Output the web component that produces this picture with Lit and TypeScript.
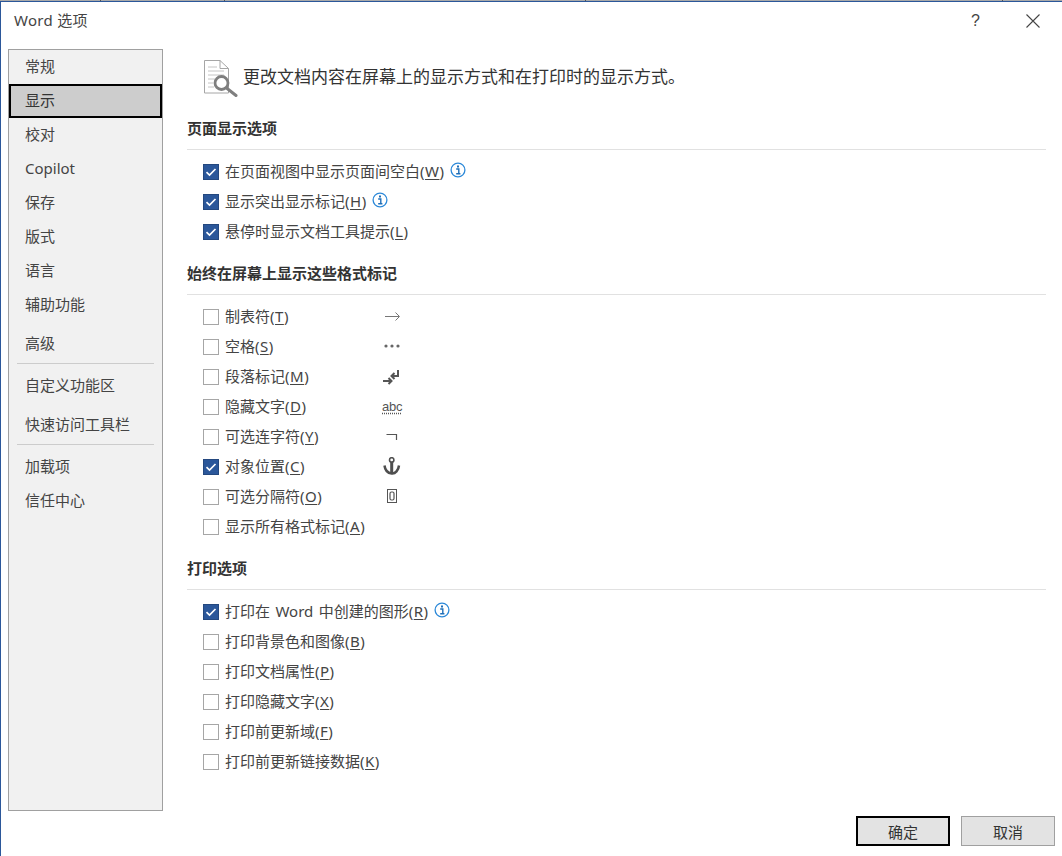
import { LitElement, html, css, svg } from "lit";
import { customElement } from "lit/decorators.js";

const nav: string[] = ["常规", "显示", "校对", "Copilot", "保存", "版式", "语言", "辅助功能"];

type Row = { label: string; key: string; on?: boolean; info?: boolean; mark?: string };

const pageRows: Row[] = [
  { label: "在页面视图中显示页面间空白", key: "W", on: true, info: true },
  { label: "显示突出显示标记", key: "H", on: true, info: true },
  { label: "悬停时显示文档工具提示", key: "L", on: true },
];
const markRows: Row[] = [
  { label: "制表符", key: "T", mark: "tab" },
  { label: "空格", key: "S", mark: "dots" },
  { label: "段落标记", key: "M", mark: "para" },
  { label: "隐藏文字", key: "D", mark: "abc" },
  { label: "可选连字符", key: "Y", mark: "hyphen" },
  { label: "对象位置", key: "C", on: true, mark: "anchor" },
  { label: "可选分隔符", key: "O", mark: "box" },
  { label: "显示所有格式标记", key: "A" },
];
const printRows: Row[] = [
  { label: "打印在 Word 中创建的图形", key: "R", on: true, info: true },
  { label: "打印背景色和图像", key: "B" },
  { label: "打印文档属性", key: "P" },
  { label: "打印隐藏文字", key: "X" },
  { label: "打印前更新域", key: "F" },
  { label: "打印前更新链接数据", key: "K" },
];

const marks: Record<string, unknown> = {
  tab: svg`<path d="M2 9.500H16M12.500 5.500l4 4-4 4" fill="none" stroke="#777" stroke-width="1"/>`,
  dots: svg`<g fill="#666"><circle cx="3" cy="9" r="1.600"/><circle cx="9" cy="9" r="1.600"/><circle cx="15" cy="9" r="1.600"/></g>`,
  para: svg`<path d="M15 3V9H8.500M11.500 6 8.500 9l3 3M0 14H8M5.500 11l3 3-3 3" fill="none" stroke="#555" stroke-width="2"/>`,
  hyphen: svg`<path d="M3.500 7.500H13.500V13" fill="none" stroke="#555" stroke-width="1.200"/>`,
  anchor: svg`<g fill="none" stroke="#4f4f4f"><circle cx="8.700" cy="2.900" r="2.200" stroke-width="1.600"/><path d="M8.700 5V17" stroke-width="3"/><path d="M1.500 8.500C2 13 5 16 8.700 16.500S15.500 13 16 8.500" stroke-width="2.500"/></g>`,
  box: svg`<g fill="none" stroke="#555"><rect x="4.500" y="2.500" width="9" height="13" stroke-width="1"/><rect x="7" y="5" width="4" height="8" rx="1.500" stroke-width="1.200"/></g>`,
};

@customElement("app-root")
export class AppRoot extends LitElement {
  static styles = css`
    :host {
      display: block;
      width: 1062px;
      height: 856px;
      overflow: hidden;
      background: #fff;
      font-family: "Noto Sans", "Noto Sans CJK SC", "Liberation Sans", sans-serif;
      font-size: 15px;
      color: #444;
    }
    .strip {
      height: 1px;
      background:
        linear-gradient(#555, #555) 100px 0 / 1px 1px no-repeat,
        linear-gradient(#555, #555) 224px 0 / 1px 1px no-repeat,
        linear-gradient(#555, #555) 585px 0 / 1px 1px no-repeat,
        linear-gradient(#555, #555) 1002px 0 / 1px 1px no-repeat,
        #a9a9a9;
    }
    .win {
      height: 855px;
      box-sizing: border-box;
      border-left: 1px solid #2b579a;
      border-top: 1px solid #2b579a;
    }
    .title {
      height: 47px;
      box-sizing: border-box;
      display: flex;
      align-items: center;
      padding: 0 22px 10px 13px;
    }
    .title .name { flex: 1; line-height: 30px; letter-spacing: 0.300px; padding-bottom: 2px; }
    .help { font-family: "Liberation Sans", sans-serif; font-size: 16px; width: 55px; color: #444; }
    .close { display: block; }
    .main { display: flex; height: 762px; padding-left: 7px; }
    .side {
      width: 155px;
      height: 762px;
      box-sizing: border-box;
      flex: none;
      background: #f1f1f1;
      border: 1px solid #a0a0a0;
    }
    .nav {
      height: 34px;
      display: flex;
      align-items: center;
      box-sizing: border-box;
      padding: 0 0 2px 16px;
      line-height: 24px;
    }
    .nav.sel {
      background: #cdcdcd;
      border: 2px solid #000;
      padding: 0 0 3px 14px;
      color: #333;
    }
    .nav.adv { height: 41px; padding: 1px 0 0 16px; }
    .nav.custom { height: 42px; padding: 0 0 0 16px; }
    .nav.quick { height: 38px; }
    .sep { height: 1px; background: #ccc; margin: 0 8px; }
    .sep.last { margin-bottom: 5px; }
    .content { flex: 1; padding-left: 24px; padding-right: 16px; }
    .head { display: flex; align-items: center; height: 56px; padding-left: 16px; box-sizing: border-box; }
    .head svg { flex: none; display: block; margin-right: 4px; }
    .head span { font-size: 17px; line-height: 24px; color: #333; }
    h2 {
      margin: 0;
      font-size: 15px;
      font-weight: 700;
      line-height: 20px;
      color: #333;
      padding-bottom: 11px;
      border-bottom: 1px solid #e1e1e1;
    }
    .group { padding-top: 8px; padding-bottom: 9px; }
    .group.first { margin-top: 5px; }
    .rows { padding-top: 6px; padding-left: 16px; }
    .row { height: 30px; display: flex; align-items: center; }
    .box {
      width: 16px;
      height: 16px;
      box-sizing: border-box;
      border: 1px solid #a6a6a6;
      background: #fff;
      flex: none;
      margin: 2px 6px 0 0;
      display: block;
    }
    .box.on { background: #2b579a; border-color: #24487f; }
    .box svg { display: block; }
    .label { line-height: 30px; white-space: nowrap; word-spacing: 1.500px; }
    .access { letter-spacing: 0.500px; }
    .label u { text-underline-offset: 2px; }
    .label.fixed { width: 158px; }
    .info { display: block; margin-left: 5px; margin-top: -3px; flex: none; }
    .mark { display: block; flex: none; width: 20px; height: 18px; }
    .abc {
      font-family: "Liberation Sans", sans-serif;
      font-size: 13px;
      line-height: 15px;
      text-decoration: underline dotted #555;
      text-underline-offset: 2px;
      color: #555;
      letter-spacing: -0.200px;
      margin-left: -1px;
    }
    .foot { display: flex; justify-content: flex-end; gap: 11px; padding-top: 5px; padding-right: 7px; }
    .btn {
      width: 94px;
      height: 30px;
      box-sizing: border-box;
      border: 1px solid #a0a0a0;
      background: #e3e3e3;
      display: flex;
      align-items: center;
      justify-content: center;
      color: #333;
    }
    .btn.def { border: 2px solid #000; }
  `;

  private row(r: Row) {
    return html`<div class="row">
      <span class="box ${r.on ? "on" : ""}">
        ${r.on
          ? html`<svg width="14" height="14" viewBox="0 0 14 14"><path d="M2.500 7.200 5.500 10 11.500 4" fill="none" stroke="#fff" stroke-width="1.700"/></svg>`
          : null}
      </span>
      <span class="label ${r.mark ? "fixed" : ""}">${r.label}<span class="access">(<u>${r.key}</u>)</span></span>
      ${r.info
        ? html`<svg class="info" width="16" height="16" viewBox="0 0 16 16">
            <circle cx="8" cy="8" r="6.900" fill="none" stroke="#2b88d8" stroke-width="1.300"/>
            <rect x="7" y="3.500" width="2" height="2" fill="#1f6fb8"/>
            <path d="M6.200 7H8.800V11.500M6.200 11.800H10.400" fill="none" stroke="#1f6fb8" stroke-width="1.400"/>
          </svg>`
        : null}
      ${r.mark === "abc"
        ? html`<span class="abc">abc</span>`
        : r.mark
          ? html`<svg class="mark" width="20" height="18" viewBox="0 0 20 18">${marks[r.mark]}</svg>`
          : null}
    </div>`;
  }

  render() {
    return html`
      <div class="strip"></div>
      <div class="win">
        <div class="title">
          <span class="name">Word 选项</span>
          <span class="help">?</span>
          <svg class="close" width="14" height="14" viewBox="0 0 14 14"><path d="M.500.500 13.500 13.500M13.500.500.500 13.500" stroke="#444" stroke-width="1.100" fill="none"/></svg>
        </div>
        <div class="main">
          <div class="side">
            ${nav.map((n) => html`<div class="nav ${n === "显示" ? "sel" : ""}">${n}</div>`)}
            <div class="nav adv">高级</div>
            <div class="sep"></div>
            <div class="nav custom">自定义功能区</div>
            <div class="nav quick">快速访问工具栏</div>
            <div class="sep last"></div>
            <div class="nav">加载项</div>
            <div class="nav">信任中心</div>
          </div>
          <div class="content">
            <div class="head">
              <svg width="36" height="40" viewBox="0 0 36 40">
                <path d="M1.500 3.500H17L25.500 11.500V36H1.500Z" fill="#fff" stroke="#a6a6a6"/>
                <path d="M17 3.500V11.500H25.500" fill="none" stroke="#a6a6a6"/>
                <path d="M5 10H14M5 14H21M5 18H21M5 22H12M5 26H10M5 30H11" stroke="#c4c4c4" fill="none"/>
                <circle cx="18.500" cy="26" r="6.500" fill="#fff" stroke="#7f7f7f" stroke-width="2.800"/>
                <path d="M23.500 31 33 38.500" stroke="#7f7f7f" stroke-width="3" stroke-linecap="round"/>
              </svg>
              <span>更改文档内容在屏幕上的显示方式和在打印时的显示方式。</span>
            </div>
            <div class="group first">
              <h2>页面显示选项</h2>
              <div class="rows">${pageRows.map((r) => this.row(r))}</div>
            </div>
            <div class="group">
              <h2>始终在屏幕上显示这些格式标记</h2>
              <div class="rows">${markRows.map((r) => this.row(r))}</div>
            </div>
            <div class="group">
              <h2>打印选项</h2>
              <div class="rows">${printRows.map((r) => this.row(r))}</div>
            </div>
          </div>
        </div>
        <div class="foot">
          <div class="btn def">确定</div>
          <div class="btn">取消</div>
        </div>
      </div>
    `;
  }
}
